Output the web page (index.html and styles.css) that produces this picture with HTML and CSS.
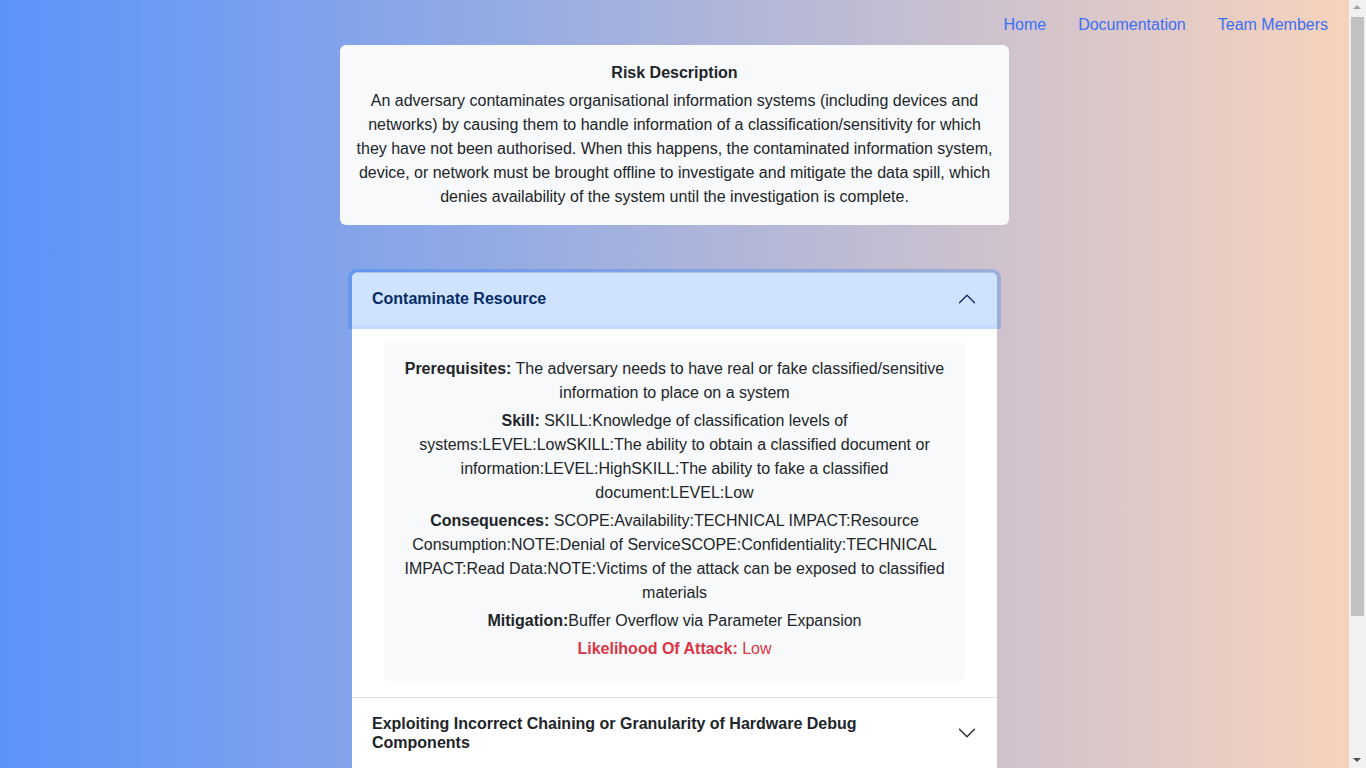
FILE: index.html
```html
<!DOCTYPE html>
<html lang="en">
<head>
<meta charset="utf-8">
<title>Risk Description</title>
<link rel="stylesheet" href="styles.css">
</head>
<body>
<div class="app">
  <nav class="topnav">
    <a href="#" class="nav-link">Home</a>
    <a href="#" class="nav-link">Documentation</a>
    <a href="#" class="nav-link">Team Members</a>
  </nav>
  <main class="page">
    <section class="risk-card">
      <h2 class="risk-title">Risk Description</h2>
      <p class="risk-text">An adversary contaminates organisational information systems (including devices and networks) by causing them to handle information of a classification/sensitivity for which they have not been authorised. When this happens, the contaminated information system, device, or network must be brought offline to investigate and mitigate the data spill, which denies availability of the system until the investigation is complete.</p>
    </section>

    <div class="accordion">
      <div class="acc-item">
        <button class="acc-btn active">
          <span class="acc-title">Contaminate Resource</span>
          <svg class="chev up" viewBox="0 0 16 16" fill="none" stroke="#052c65" stroke-linecap="round" stroke-linejoin="round"><path d="M2 5L8 11L14 5"/></svg>
        </button>
        <div class="acc-body">
          <div class="detail">
            <p><b>Prerequisites:</b> The adversary needs to have real or fake classified/sensitive information to place on a system</p>
            <p><b>Skill:</b> SKILL:Knowledge of classification levels of systems:LEVEL:LowSKILL:The ability to obtain a classified document or information:LEVEL:HighSKILL:The ability to fake a classified document:LEVEL:Low</p>
            <p><b>Consequences:</b> SCOPE:Availability:TECHNICAL IMPACT:Resource Consumption:NOTE:Denial of ServiceSCOPE:Confidentiality:TECHNICAL IMPACT:Read Data:NOTE:Victims of the attack can be exposed to classified materials</p>
            <p><b>Mitigation:</b>Buffer Overflow via Parameter Expansion</p>
            <p class="likely"><b>Likelihood Of Attack:</b> Low</p>
          </div>
        </div>
      </div>
      <div class="acc-item">
        <button class="acc-btn">
          <span class="acc-title">Exploiting Incorrect Chaining or Granularity of Hardware Debug Components</span>
          <svg class="chev" viewBox="0 0 16 16" fill="none" stroke="#212529" stroke-linecap="round" stroke-linejoin="round"><path d="M2 5L8 11L14 5"/></svg>
        </button>
      </div>
      <div class="acc-item">
        <button class="acc-btn">
          <span class="acc-title">Hardware Component Substitution</span>
          <svg class="chev" viewBox="0 0 16 16" fill="none" stroke="#212529" stroke-linecap="round" stroke-linejoin="round"><path d="M2 5L8 11L14 5"/></svg>
        </button>
      </div>
      <div class="acc-item">
        <button class="acc-btn">
          <span class="acc-title">Malicious Logic Insertion into Product Hardware</span>
          <svg class="chev" viewBox="0 0 16 16" fill="none" stroke="#212529" stroke-linecap="round" stroke-linejoin="round"><path d="M2 5L8 11L14 5"/></svg>
        </button>
      </div>
    </div>
  </main>
</div>
<div class="fake-scrollbar" aria-hidden="true">
  <div class="sb-arrow sb-up"></div>
  <div class="sb-thumb"></div>
  <div class="sb-arrow sb-down"></div>
</div>
</body>
</html>
```

FILE: styles.css
```css
html, body {
  margin: 0;
  padding: 0;
}
body {
  font-family: "Liberation Sans", Arial, sans-serif;
  font-size: 16px;
  line-height: 1.5;
  color: #212529;
  background: #f1f1f1;
}
.app {
  margin-right: 17px;
  min-height: 100vh;
  background: linear-gradient(to right, #5b93fa 0%, #f7d3bd 100%);
}
.fake-scrollbar {
  position: fixed;
  top: 0;
  right: 0;
  width: 17px;
  height: 100vh;
  background: #f1f1f1;
  display: flex;
  flex-direction: column;
  align-items: center;
}
.sb-arrow {
  height: 17px;
  width: 17px;
  position: relative;
  flex: 0 0 17px;
}
.sb-arrow::after {
  content: "";
  position: absolute;
  left: 4px;
  width: 0;
  height: 0;
  border-left: 4.5px solid transparent;
  border-right: 4.5px solid transparent;
}
.sb-up::after {
  top: 5px;
  border-bottom: 4px solid #a3a3a3;
}
.sb-down::after {
  top: 7px;
  border-top: 4px solid #505050;
}
.sb-thumb {
  width: 13px;
  height: 599px;
  background: #c1c1c1;
}
.sb-down {
  margin-top: auto;
}
.topnav {
  display: flex;
  justify-content: flex-end;
  gap: 32px;
  height: 45px;
  box-sizing: border-box;
  padding: 13px 21px 0 0;
}
.nav-link {
  color: #3a6ff7;
  text-decoration: none;
  line-height: 24px;
}
.page {
  display: flex;
  flex-direction: column;
  align-items: center;
  padding-bottom: 86px;
}
.risk-card {
  width: 669px;
  box-sizing: border-box;
  background: #f8f9fa;
  border-radius: 6px;
  padding: 16px 16px 16px;
  text-align: center;
}
.risk-title {
  margin: 0 0 4px;
  font-size: 16px;
  font-weight: bold;
  line-height: 24px;
}
.risk-text {
  margin: 0;
}
.accordion {
  width: 645px;
  margin-top: 47px;
  background: #fff;
  border-radius: 6px;
}
.acc-item {
  border-bottom: 1px solid #dee2e6;
  background: #fff;
}
.acc-item:first-child {
  border-top: 1px solid #dee2e6;
  border-radius: 6px 6px 0 0;
}
.acc-item:first-child .acc-btn {
  border-radius: 5px 5px 0 0;
}
.acc-btn {
  position: relative;
  display: flex;
  align-items: center;
  width: 100%;
  border: 0;
  margin: 0;
  padding: 16px 20px;
  background: #fff;
  font-family: inherit;
  font-size: 16px;
  text-align: left;
  color: #212529;
  cursor: pointer;
}
.acc-btn.active {
  background: #cfe2ff;
  color: #052c65;
  z-index: 3;
  box-shadow: 0 0 0 4px rgba(13, 110, 253, 0.25);
}
.acc-title {
  font-weight: bold;
  line-height: 1.2;
  padding-right: 70px;
}
.chev {
  flex: 0 0 20px;
  width: 20px;
  height: 20px;
  margin-left: auto;
}
.chev.up {
  transform: rotate(180deg);
}
.acc-body {
  padding: 16px 32px;
}
.detail {
  background: #f8f9fa;
  border-radius: 6px;
  padding: 16px 16px 16px;
  text-align: center;
}
.detail p {
  margin: 0 0 4px;
}
.detail .likely {
  color: #dc3545;
}
```
